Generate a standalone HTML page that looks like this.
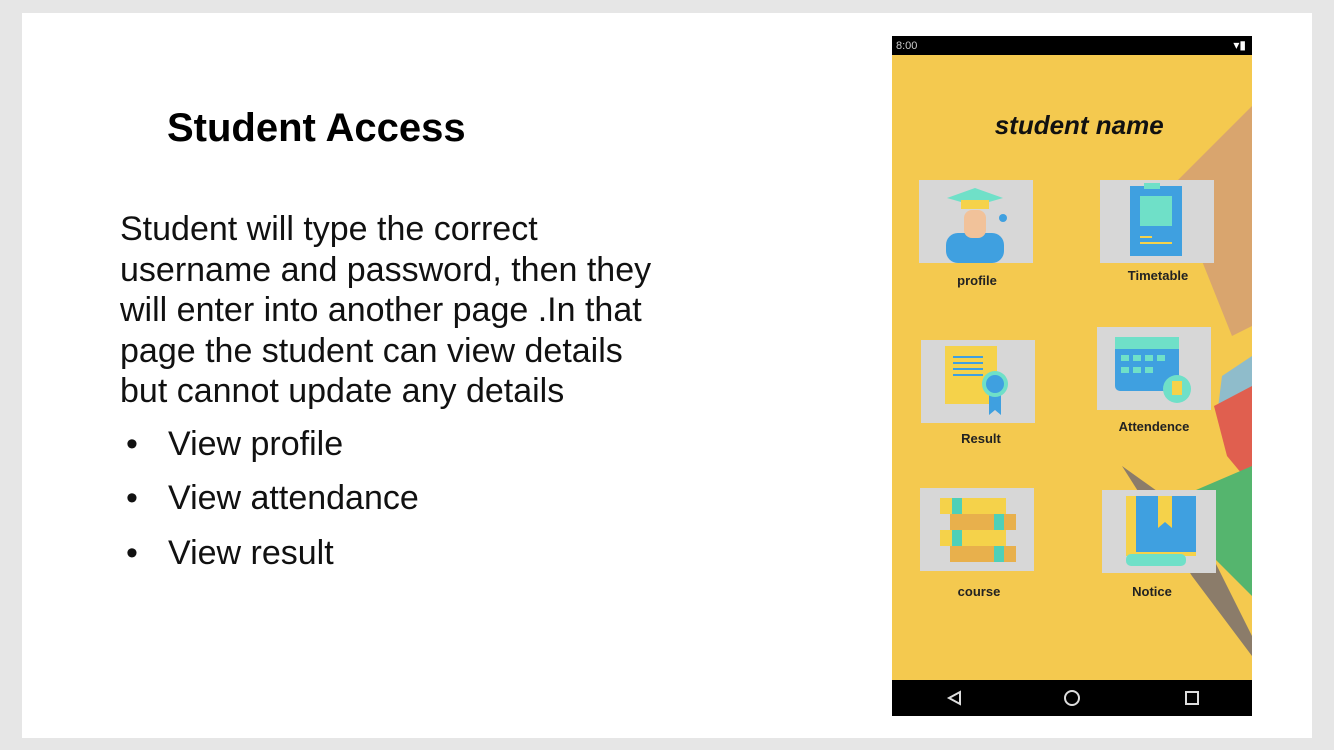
<!DOCTYPE html>
<html><head><meta charset="utf-8"><style>
body{margin:0;width:1334px;height:750px;background:#e6e6e6;position:relative;overflow:hidden;font-family:"Liberation Sans",sans-serif}
.slide{position:absolute;left:22px;top:13px;width:1290px;height:725px;background:#fff}
.t{position:absolute;left:167px;top:106px;font-size:40px;font-weight:bold;color:#000}
.b{position:absolute;left:120px;top:209px;font-size:34px;line-height:40.5px;color:#111;white-space:nowrap;letter-spacing:0}
.li{position:absolute;left:126px;font-size:34px;color:#111}
.li span{position:absolute;left:42px;white-space:nowrap}
.ph{position:absolute;left:892px;top:36px;width:360px;height:680px;background:#f4c94f;overflow:hidden}
.sb{position:absolute;left:0;top:0;width:360px;height:19px;background:#000;color:#ccc;font-size:11px}
.nb{position:absolute;left:0;bottom:0;width:360px;height:36px;background:#000}
.tile{position:absolute;width:114px;height:83px;background:#d7d7d7}
.lb{position:absolute;font-size:13px;font-weight:bold;color:#222;transform:translateX(-50%)}
</style></head><body>
<div class="slide"></div>
<div class="t">Student Access</div>
<div class="b">Student will type the correct<br>username and password, then they<br>will enter into another page .In that<br>page the student can view details<br>but cannot update any details</div>
<div class="li" style="top:425px">•<span>View profile</span></div>
<div class="li" style="top:479px">•<span>View attendance</span></div>
<div class="li" style="top:534px">•<span>View result</span></div>
<div class="ph">
<svg style="position:absolute;left:0;top:0" width="360" height="680">
<polygon points="280,150 360,70 360,290 340,300" fill="#d9a56e"/>
<polygon points="330,340 360,320 360,400 325,380" fill="#8fbccb"/>
<polygon points="322,370 360,350 360,450 335,420" fill="#e05f4f"/>
<polygon points="290,460 360,430 360,560 310,510" fill="#55b56e"/>
<polygon points="230,430 300,480 360,600 360,620 300,540" fill="#8b7c6a"/>
</svg>
<div class="sb"><span style="position:absolute;left:4px;top:4px">8:00</span><span style="position:absolute;right:6px;top:2px;color:#fff;font-size:12px">▾▮</span></div>
<div style="position:absolute;left:0;width:360px;top:74px;text-align:center;font-size:26px;font-weight:bold;font-style:italic;color:#111">&nbsp;&nbsp;student name</div>
<div class="tile" style="left:27px;top:144px"><svg width="114" height="83"><rect x="27" y="53" width="58" height="30" rx="12" fill="#3fa0e0"/><rect x="45" y="30" width="22" height="28" rx="8" fill="#f1c29a"/><polygon points="56,8 84,18 56,26 28,18" fill="#6fe0c8"/><rect x="42" y="20" width="28" height="9" fill="#f5d24a"/><circle cx="84" cy="38" r="4" fill="#3fa0e0"/></svg></div>
<div class="lb" style="left:85px;top:237px">profile</div>
<div class="tile" style="left:208px;top:144px"><svg width="114" height="83"><rect x="30" y="6" width="52" height="70" fill="#3fa0e0"/><rect x="44" y="3" width="16" height="6" fill="#6fe0c8"/><rect x="40" y="16" width="32" height="30" fill="#6fe0c8"/><rect x="40" y="56" width="12" height="2" fill="#f5d24a"/><rect x="40" y="62" width="32" height="2" fill="#f5d24a"/></svg></div>
<div class="lb" style="left:266px;top:232px">Timetable</div>
<div class="tile" style="left:29px;top:304px"><svg width="114" height="83"><rect x="24" y="6" width="52" height="58" fill="#f5d24a"/><g fill="#3fa0e0"><rect x="32" y="16" width="30" height="2"/><rect x="32" y="22" width="30" height="2"/><rect x="32" y="28" width="30" height="2"/><rect x="32" y="34" width="30" height="2"/></g><polygon points="68,50 80,50 80,75 74,70 68,75" fill="#3fa0e0"/><circle cx="74" cy="44" r="13" fill="#6fe0c8"/><circle cx="74" cy="44" r="9" fill="#3fa0e0"/></svg></div>
<div class="lb" style="left:89px;top:395px">Result</div>
<div class="tile" style="left:205px;top:291px"><svg width="114" height="83"><rect x="18" y="10" width="64" height="54" rx="5" fill="#3fa0e0"/><rect x="18" y="10" width="64" height="12" fill="#6fe0c8"/><g fill="#6fe0c8"><rect x="24" y="28" width="8" height="6"/><rect x="36" y="28" width="8" height="6"/><rect x="48" y="28" width="8" height="6"/><rect x="60" y="28" width="8" height="6"/><rect x="24" y="40" width="8" height="6"/><rect x="36" y="40" width="8" height="6"/><rect x="48" y="40" width="8" height="6"/></g><circle cx="80" cy="62" r="14" fill="#6fe0c8"/><rect x="75" y="54" width="10" height="14" fill="#f5d24a"/></svg></div>
<div class="lb" style="left:262px;top:383px">Attendence</div>
<div class="tile" style="left:28px;top:452px"><svg width="114" height="83"><rect x="20" y="10" width="66" height="16" fill="#f5d24a"/><rect x="30" y="26" width="66" height="16" fill="#e8b04c"/><rect x="20" y="42" width="66" height="16" fill="#f5d24a"/><rect x="30" y="58" width="66" height="16" fill="#e8b04c"/><g fill="#4fd0b8"><rect x="32" y="10" width="10" height="16"/><rect x="74" y="26" width="10" height="16"/><rect x="32" y="42" width="10" height="16"/><rect x="74" y="58" width="10" height="16"/></g></svg></div>
<div class="lb" style="left:87px;top:548px">course</div>
<div class="tile" style="left:210px;top:454px"><svg width="114" height="83"><rect x="24" y="6" width="70" height="60" fill="#f5d24a"/><rect x="34" y="6" width="60" height="56" fill="#3fa0e0"/><polygon points="56,6 70,6 70,38 63,32 56,38" fill="#f5d24a"/><rect x="24" y="64" width="60" height="12" rx="5" fill="#6fe0c8"/></svg></div>
<div class="lb" style="left:260px;top:548px">Notice</div>
<div class="nb"><svg width="360" height="36"><polygon points="68,12 68,24 57,18" fill="none" stroke="#ddd" stroke-width="2"/><circle cx="180" cy="18" r="7" fill="none" stroke="#ddd" stroke-width="2"/><rect x="294" y="12" width="12" height="12" fill="none" stroke="#ddd" stroke-width="2"/></svg></div>
</div>
</body></html>
